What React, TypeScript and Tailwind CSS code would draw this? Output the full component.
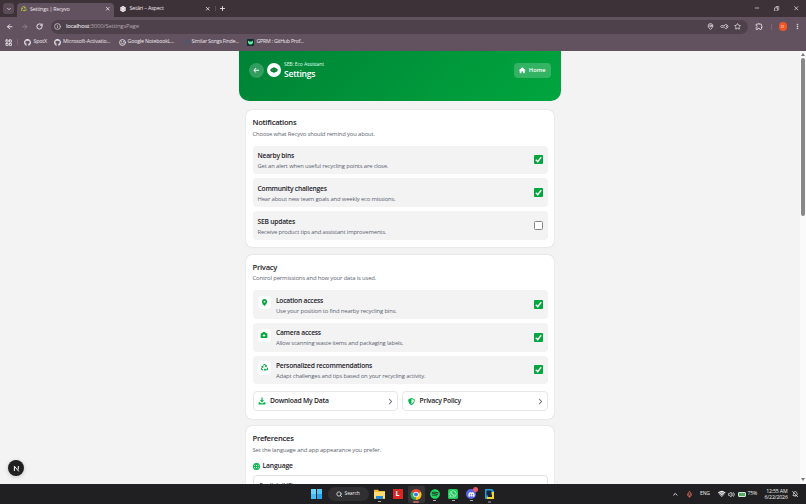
import type { ReactNode } from "react";
import { FaArrowLeft, FaGithub, FaHouse, FaLocationDot, FaRecycle, FaShieldHalved, FaSpotify, FaWhatsapp, FaDiscord } from "react-icons/fa6";
import { MdOutlineExtension } from "react-icons/md";
import { ArrowLeft, ArrowRight, BellOff, ChevronDown, ChevronRight, ChevronUp, Copy, Globe, Info, KeyRound, LayoutGrid, MapPin, Mic, Minus, MoreVertical, Plus, RotateCw, Search, Settings, Smile, Star, Volume2, Wifi, X } from "lucide-react";

function Tick({ on }: { on: boolean }) {
  return on ? (
    <span className="mr-[5px] flex size-[9px] shrink-0 items-center justify-center rounded-[1px] bg-[#00a63e]">
      <svg viewBox="0 0 9 9" className="size-[9px]" fill="none" stroke="white" strokeWidth="1.4">
        <path d="M1.8 4.8 3.7 6.6 7.2 2.2" />
      </svg>
    </span>
  ) : (
    <span className="mr-[5px] size-[9px] shrink-0 rounded-[1.5px] border border-[#858585] bg-white" />
  );
}

function CameraIcon() {
  return (
    <svg viewBox="0 0 8 8" className="size-[8px]">
      <path d="M.7 2.2h1.6L2.8 1h2.4l.5 1.2h1.6V7H.7Z" fill="currentColor" />
      <path d="M4 3.2v2.6M2.7 4.5h2.6" stroke="white" strokeWidth=".9" />
    </svg>
  );
}

function DownloadIcon() {
  return (
    <svg viewBox="0 0 8 8" className="size-[8px]" fill="currentColor">
      <path d="M3.4.6h1.2v2.6h1.6L4 5.5 1.8 3.2h1.6ZM.6 5.2h1.3L3 6.3h2l1.1-1.1h1.3v2.2H.6Z" />
    </svg>
  );
}

function Row({ title, text, on, icon }: { title: string; text: string; on: boolean; icon?: ReactNode }) {
  return (
    <div className="flex h-[28.8px] items-center rounded-[4px] bg-[#f3f3f4] pl-[5px]">
      {icon && (
        <span className="mt-[-4px] mr-[5px] flex size-[13.4px] items-center justify-center rounded-[4px] bg-white text-[#00a63e]">{icon}</span>
      )}
      <div className="flex-1 pt-[1.4px] whitespace-nowrap">
        <div className="h-[10px] text-[6.7px] leading-[10px] font-semibold tracking-[-0.21px] text-[#1e2228]">{title}</div>
        <div className="h-[9px] pt-px text-[5.9px] leading-[9px] tracking-[-0.16px] text-[#5c6470]">{text}</div>
      </div>
      <Tick on={on} />
    </div>
  );
}

function Card({ title, text, className, children }: { title: string; text: string; className: string; children: ReactNode }) {
  return (
    <section className={"mx-auto w-[308px] shrink-0 rounded-[6px] bg-white px-[6.5px] pt-[7px] shadow-[0_0_1.5px_rgba(0,0,0,0.2)] " + className}>
      <h2 className="h-[11px] text-[7.6px] leading-[11px] font-semibold tracking-[-0.24px] text-[#1e2228]">{title}</h2>
      <p className="mb-[7px] h-[10.5px] pt-[1.7px] text-[5.9px] leading-[9.5px] tracking-[-0.15px] text-[#5c6470]">{text}</p>
      {children}
    </section>
  );
}

function LinkButton({ icon, label }: { icon: ReactNode; label: string }) {
  return (
    <div className="flex h-[20.5px] flex-1 items-center rounded-[4px] border border-[#e5e7eb] pr-[2px] pl-[4.5px] text-[6.8px] font-semibold text-[#1e2228]">
      <span className="mr-[4px] flex w-[8px] justify-center text-[#00b84a]">{icon}</span>
      <span className="flex-1 pt-[0.6px] tracking-[-0.22px]">{label}</span>
      <ChevronRight className="size-[9px] text-[#5d6674]" strokeWidth={2.8} />
    </div>
  );
}

function Browser() {
  return (
    <header className="flex h-[51px] shrink-0 flex-col bg-[#62525f] text-[5.6px] text-[#eee7ed]">
      <div className="flex h-[17px] items-end bg-[#3e3239]">
        <div className="mb-[3px] ml-[3px] flex size-[11px] items-center justify-center rounded-[3px] bg-[#5a4b56]">
          <ChevronDown className="size-[6px]" strokeWidth={3} />
        </div>
        <div className="ml-[3px] flex h-[14px] w-[97px] items-center rounded-t-[4px] bg-[#62525f] pr-[4px] pb-[2px] pl-[4px]">
          <FaRecycle className="mr-[3.5px] size-[5.5px] text-[#c6d631]" />
          <span className="flex-1 text-[5.4px] tracking-[-0.22px]">Settings | Recyvo</span>
          <X className="size-[5.5px]" strokeWidth={3.5} />
        </div>
        <div className="flex h-[17px] w-[101px] items-center pr-[5px] pl-[6px]">
          <Settings className="mr-[3.5px] size-[6px]" strokeWidth={5} />
          <span className="flex-1 text-[5.5px] tracking-[-0.22px]">Setări – Aspect</span>
          <X className="size-[5.5px]" strokeWidth={3.5} />
        </div>
        <span className="mb-[6px] h-[5px] w-px bg-[#5b4c56]" />
        <Plus className="mb-[5px] ml-[3px] size-[7px]" strokeWidth={3} />
        <div className="mb-[5.5px] ml-auto flex items-center gap-[13.5px] pr-[7px]">
          <Minus className="size-[6px]" strokeWidth={2.6} />
          <Copy className="size-[5.5px] -scale-x-100" strokeWidth={3} />
          <X className="size-[6.5px]" strokeWidth={2.6} />
        </div>
      </div>
      <div className="flex h-[19px] items-center">
        <ArrowLeft className="ml-[6px] size-[7.5px]" strokeWidth={3} />
        <ArrowRight className="ml-[7.5px] size-[7.5px] text-[#94858f]" strokeWidth={2.6} />
        <RotateCw className="ml-[7.5px] size-[7px]" strokeWidth={3.2} />
        <div className="ml-[8px] flex h-[14px] w-[697px] items-center rounded-full bg-[#4e414b] pr-[7px] pl-[3px]">
          <Info className="size-[7px] text-[#d7ccd4]" strokeWidth={2.6} />
          <span className="ml-[5px] flex-1 text-[6px] tracking-[-0.21px] text-[#b3a5af]"><span className="text-white">localhost</span>:3000/SettingsPage</span>
          <MapPin className="mr-[7px] size-[7px]" strokeWidth={2.6} />
          <KeyRound className="mr-[6px] size-[7px] rotate-45" strokeWidth={2.6} />
          <Star className="size-[7px]" strokeWidth={2.6} />
        </div>
        <MdOutlineExtension className="ml-[7px] size-[8.5px]" />
        <span className="ml-[7px] h-[6px] w-px bg-[#7b6877]" />
        <span className="ml-[7px] flex size-[8.5px] items-center justify-center rounded-full bg-[#f15524] text-[4px] text-white">D</span>
        <MoreVertical className="ml-[7px] size-[7px]" strokeWidth={3.5} />
      </div>
      <div className="flex h-[15px] items-center pb-[2.5px] text-[5.3px] tracking-[-0.16px] whitespace-nowrap">
        <LayoutGrid className="ml-[4.5px] size-[7.5px]" strokeWidth={2.8} />
        <span className="ml-[5px] h-[6px] w-px bg-[#7b6877]" />
        <div className="ml-[6px] flex w-[29.5px] items-center gap-[2.5px]"><FaGithub className="size-[7px]" />SpotX</div>
        <div className="flex w-[65px] items-center gap-[2.5px]"><FaGithub className="size-[7px]" /><span className="tracking-[-0.14px]">Microsoft-Activatio...</span></div>
        <div className="flex w-[66px] items-center gap-[2px]"><Smile className="size-[7px]" strokeWidth={3} /><span className="tracking-[-0.19px]">Google NotebookL...</span></div>
        <div className="flex w-[62.5px] items-center gap-[3px]"><span className="mb-px size-[4px] rotate-45 rounded-[1px] bg-[#4d586f]" /><span className="tracking-[-0.22px]">Similar Songs Finde...</span></div>
        <div className="flex items-center gap-[2.5px]">
          <svg viewBox="0 0 7 7" className="size-[7px]"><rect width="7" height="7" rx="1" fill="#102c2c" /><path d="M1 1.6 2.3 2.5h2.4L6 1.6v2.5L4.5 5.4h-2L1 4.1Z" fill="#61e89b" /></svg>
          <span className="tracking-[-0.26px]">GPRM : GitHub Prof...</span>
        </div>
      </div>
    </header>
  );
}

function Taskbar() {
  return (
    <footer className="flex h-[20px] shrink-0 items-center bg-[#202022] text-[5px] text-[#eee]">
      <div className="ml-[311px] grid size-[10.5px] grid-cols-2 gap-[0.6px]">
        <i className="bg-[#69d5fb]" /><i className="bg-[#52c4f6]" /><i className="bg-[#46bdf4]" /><i className="bg-[#27a4eb]" />
      </div>
      <div className="ml-[6px] flex h-[14px] w-[41px] items-center rounded-full bg-[#303033] pl-[8.5px]">
        <Search className="mr-[2px] size-[6.5px]" strokeWidth={2.8} /><span className="tracking-[-0.1px]">Search</span>
      </div>
      <svg viewBox="0 0 11 16" className="ml-[5.5px] h-[16px] w-[11px]">
        <path d="M0 3.8h4l1 1.2h6v8H0Z" fill="#f6bc35" /><path d="M0 6h11v6H0Z" fill="#ffdc70" /><path d="M2 10h7v3H2Z" fill="#268bd2" /><path d="M4 15.5h3" stroke="#aaa" />
      </svg>
      <span className="ml-[7.5px] flex size-[10px] items-center justify-center bg-[#dc2525] text-[7px] font-bold text-white">L</span>
      <span className="ml-[5px] flex h-[17px] w-[17px] justify-center rounded-[2px] bg-[#343436]">
        <svg viewBox="0 0 12 17" className="h-[17px] w-[12px]">
          <path d="M6 8.5 1.24 5.75A5.5 5.5 0 0 1 10.76 5.75Z" fill="#ea4335" />
          <path d="M6 8.5 10.76 5.75A5.5 5.5 0 0 1 6 14Z" fill="#fbc116" />
          <path d="M6 8.5V14A5.5 5.5 0 0 1 1.24 5.75Z" fill="#34a853" />
          <circle cx="6" cy="8.5" r="2.7" fill="white" /><circle cx="6" cy="8.5" r="2" fill="#3978e5" />
          <path d="M3.2 16h5.6" stroke="#ed7979" strokeWidth="1.3" />
        </svg>
      </span>
      <span className="ml-[5px] flex flex-col items-center gap-[1px] pt-[2px]"><FaSpotify className="size-[10px] text-[#1ed760]" /><i className="h-px w-[3px] bg-[#aaa]" /></span>
      <span className="ml-[8.5px] flex flex-col items-center gap-[1px] pt-[2px]"><span className="flex size-[10px] items-center justify-center rounded-[1.5px] bg-[#1fc95c]"><FaWhatsapp className="size-[8px]" /></span><i className="h-px w-[3px] bg-[#aaa]" /></span>
      <span className="relative ml-[8px] flex flex-col items-center gap-[1px] pt-[2px]"><span className="flex size-[10px] items-center justify-center rounded-full bg-[#5865f2]"><FaDiscord className="size-[7px]" /></span><i className="h-px w-[3px] bg-[#aaa]" /><i className="absolute top-0 right-[-2px] size-[5px] rounded-full bg-[#ed5b60]" /></span>
      <svg viewBox="0 0 11 17" className="ml-[8px] h-[17px] w-[11px]">
        <path d="M1 3h7l2 2v4H4v4H1Z" fill="#249bdd" /><path d="M4 6h6v7H3v-2h5V8H4Z" fill="#f2d637" /><path d="M2.5 4.5h5v5h-5Z" fill="#10263a" /><path d="M4 16h3" stroke="#aaa" />
      </svg>
      <div className="ml-auto flex items-center pr-[8px]">
        <ChevronUp className="size-[6.5px]" strokeWidth={3.5} />
        <Mic className="ml-[7px] size-[7px] text-[#d8695e]" strokeWidth={2.8} />
        <span className="ml-[7.5px] w-[11px] text-[5px] tracking-[-0.1px]">ENG</span>
        <Wifi className="ml-[7px] size-[7.5px]" strokeWidth={3.5} />
        <Volume2 className="ml-[2.5px] size-[7px]" strokeWidth={2.6} />
        <span className="ml-[3px] h-[5px] w-[8px] rounded-[1px] border border-[#d7e7d7] bg-[#55aa62]" />
        <span className="ml-[1.5px] w-[10px] text-[5.1px] tracking-[-0.2px]">75%</span>
        <div className="ml-[7px] w-[23px] text-right text-[5.2px] leading-[6.5px] tracking-[-0.15px] whitespace-nowrap"><div>12:55 AM</div><div>6/22/2026</div></div>
        <BellOff className="ml-[4px] size-[6.5px]" strokeWidth={2.6} />
      </div>
    </footer>
  );
}

export default function App() {
  return (
    <div className="flex h-[504px] w-[806px] flex-col overflow-hidden bg-[#f3f3f4] font-['Open_Sans','Noto_Sans',sans-serif]">
      <Browser />
      <div className="relative flex min-h-0 flex-1 overflow-hidden">
        <main className="flex w-[800px] flex-col overflow-hidden">
          <div className="mx-auto flex h-[50px] w-[322px] shrink-0 items-start rounded-b-[10px] bg-[linear-gradient(135deg,#008236,#00a63e)] px-[10px] pt-[12px] text-white">
            <span className="flex size-[15px] items-center justify-center rounded-full bg-white/20"><FaArrowLeft className="size-[6.5px]" /></span>
            <span className="ml-[3px] flex size-[14px] items-center justify-center rounded-full bg-white">
              <svg viewBox="0 0 8 6" className="h-[6px] w-[8px]"><path d="M1.4 1.5 4 .3l2.6 1.2L8 3 6.6 4.7 4 5.8 1.4 4.7 0 3Z" fill="#087c35" /><path d="M2 3h4" stroke="#75ad8a" strokeWidth=".8" strokeDasharray="1.2 1.4" /></svg>
            </span>
            <div className="mt-[-2px] ml-[3px] flex-1">
              <div className="text-[5.1px] leading-[7px] tracking-[-0.15px] text-[#dcfce7]">SEB: Eco Assistant</div>
              <h1 className="text-[8.6px] leading-[12px] font-semibold tracking-[-0.25px]">Settings</h1>
            </div>
            <span className="flex h-[15px] w-[37px] items-center justify-center gap-[3px] rounded-[4px] bg-white/20 text-[5.8px] font-semibold"><FaHouse className="size-[6.5px]" />Home</span>
          </div>
          <Card title="Notifications" text="Choose what Recyvo should remind you about." className="mt-[9px] h-[137px]">
            <div className="flex flex-col gap-[4px]">
              <Row title="Nearby bins" text="Get an alert when useful recycling points are close." on />
              <Row title="Community challenges" text="Hear about new team goals and weekly eco missions." on />
              <Row title="SEB updates" text="Receive product tips and assistant improvements." on={false} />
            </div>
          </Card>
          <Card title="Privacy" text="Control permissions and how your data is used." className="mt-[7.5px] h-[164px]">
            <div className="flex flex-col gap-[4px]">
              <Row title="Location access" text="Use your position to find nearby recycling bins." on icon={<FaLocationDot className="size-[7px]" />} />
              <Row title="Camera access" text="Allow scanning waste items and packaging labels." on icon={<CameraIcon />} />
              <Row title="Personalized recommendations" text="Adapt challenges and tips based on your recycling activity." on icon={<FaRecycle className="size-[7px]" />} />
            </div>
            <div className="mt-[6.5px] flex gap-[4px]">
              <LinkButton icon={<DownloadIcon />} label="Download My Data" />
              <LinkButton icon={<FaShieldHalved className="size-[7px]" />} label="Privacy Policy" />
            </div>
          </Card>
          <Card title="Preferences" text="Set the language and app appearance you prefer." className="mt-[7.5px] h-[100px]">
            <div className="flex h-[10px] items-center gap-[3px] text-[6.8px] font-semibold tracking-[-0.18px] text-[#1e2228]"><Globe className="size-[7px] text-[#00b84a]" strokeWidth={3.8} />Language</div>
            <div className="mt-[3px] h-[20px] rounded-[4px] border border-[#e1e3e6] px-[6px] pt-[5px] text-[6.2px] leading-[9px]">English (US)</div>
          </Card>
        </main>
        <div className="flex w-[6px] flex-col items-center bg-[#fafafa] text-[#777]">
          <span className="mt-[2px] border-x-[2px] border-b-[3px] border-x-transparent border-b-[#777]" />
          <span className="mt-[2px] h-[158px] w-[4px] rounded-full bg-[#888]" />
          <span className="mt-auto mb-[3px] border-x-[2px] border-t-[3px] border-x-transparent border-t-[#777]" />
        </div>
        <span className="absolute top-[409px] left-[8px] flex size-[16px] items-center justify-center rounded-full bg-[#202020] text-white shadow-[0_1px_4px_rgba(0,0,0,0.2)]">
          <svg viewBox="0 0 7 7" className="size-[7px]" fill="none" stroke="currentColor"><path d="M1.4 6V1.2L5.8 6.4M5.3 1v3.5" /></svg>
        </span>
      </div>
      <Taskbar />
    </div>
  );
}
